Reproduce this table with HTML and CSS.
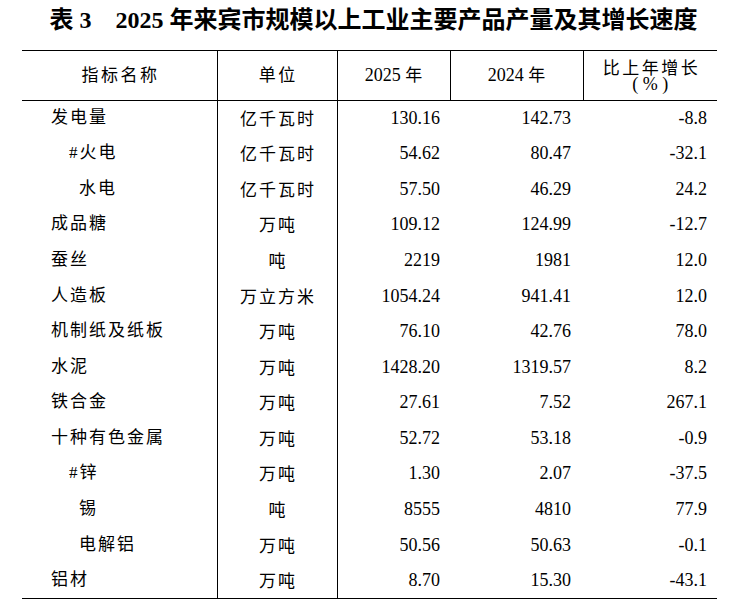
FILE: index.html
```html
<!DOCTYPE html>
<html lang="zh-CN">
<head>
<meta charset="utf-8">
<title>表3</title>
<link rel="stylesheet" href="styles.css">
</head>
<body>
<div class="page">
  <h1 class="title">表 3　2025 年来宾市规模以上工业主要产品产量及其增长速度</h1>
  <table class="data">
    <colgroup>
      <col class="c-name"><col class="c-unit"><col class="c-y1"><col class="c-y2"><col class="c-g">
    </colgroup>
    <thead>
      <tr>
        <th><span class="cj">指标名称</span></th>
        <th class="vl"><span class="cj">单位</span></th>
        <th class="vl">2025 <span class="cj">年</span></th>
        <th class="vl">2024 <span class="cj">年</span></th>
        <th class="vl"><span class="cj line">比上年增长</span><span class="pct">( % )</span></th>
      </tr>
    </thead>
    <tbody>
      <tr><td class="nm">发电量</td><td class="un">亿千瓦时</td><td class="n1">130.16</td><td class="n2">142.73</td><td class="n3">-8.8</td></tr>
      <tr><td class="nm l1">#火电</td><td class="un">亿千瓦时</td><td class="n1">54.62</td><td class="n2">80.47</td><td class="n3">-32.1</td></tr>
      <tr><td class="nm l2">水电</td><td class="un">亿千瓦时</td><td class="n1">57.50</td><td class="n2">46.29</td><td class="n3">24.2</td></tr>
      <tr><td class="nm">成品糖</td><td class="un">万吨</td><td class="n1">109.12</td><td class="n2">124.99</td><td class="n3">-12.7</td></tr>
      <tr><td class="nm">蚕丝</td><td class="un">吨</td><td class="n1">2219</td><td class="n2">1981</td><td class="n3">12.0</td></tr>
      <tr><td class="nm">人造板</td><td class="un">万立方米</td><td class="n1">1054.24</td><td class="n2">941.41</td><td class="n3">12.0</td></tr>
      <tr><td class="nm">机制纸及纸板</td><td class="un">万吨</td><td class="n1">76.10</td><td class="n2">42.76</td><td class="n3">78.0</td></tr>
      <tr><td class="nm">水泥</td><td class="un">万吨</td><td class="n1">1428.20</td><td class="n2">1319.57</td><td class="n3">8.2</td></tr>
      <tr><td class="nm">铁合金</td><td class="un">万吨</td><td class="n1">27.61</td><td class="n2">7.52</td><td class="n3">267.1</td></tr>
      <tr><td class="nm">十种有色金属</td><td class="un">万吨</td><td class="n1">52.72</td><td class="n2">53.18</td><td class="n3">-0.9</td></tr>
      <tr><td class="nm l1">#锌</td><td class="un">万吨</td><td class="n1">1.30</td><td class="n2">2.07</td><td class="n3">-37.5</td></tr>
      <tr><td class="nm l2">锡</td><td class="un">吨</td><td class="n1">8555</td><td class="n2">4810</td><td class="n3">77.9</td></tr>
      <tr><td class="nm l2">电解铝</td><td class="un">万吨</td><td class="n1">50.56</td><td class="n2">50.63</td><td class="n3">-0.1</td></tr>
      <tr><td class="nm">铝材</td><td class="un">万吨</td><td class="n1">8.70</td><td class="n2">15.30</td><td class="n3">-43.1</td></tr>
    </tbody>
  </table>
</div>
</body>
</html>
```

FILE: styles.css
```css
html, body {
  margin: 0;
  padding: 0;
  background: #ffffff;
}

body {
  color: #000000;
  font-family: "Liberation Serif", "Noto Sans CJK SC", serif;
}

.page {
  width: 695px;
  padding: 5px 0 0 22px;
}

.title {
  margin: 0;
  height: 30px;
  line-height: 30px;
  font-size: 24px;
  font-weight: bold;
  text-align: center;
  padding-left: 8px;
  white-space: nowrap;
}

.data {
  margin-top: 15px;
  width: 695px;
  border-collapse: collapse;
  table-layout: fixed;
  border-top: 1px solid #000;
  border-bottom: 1px solid #000;
}

.c-name { width: 195px; }
.c-unit { width: 120px; }
.c-y1 { width: 113px; }
.c-y2 { width: 133px; }
.c-g { width: 134px; }

.data th {
  box-sizing: border-box;
  height: 50px;
  padding: 0 0 2px 0;
  font-weight: normal;
  font-size: 18px;
  line-height: 18px;
  text-align: center;
  vertical-align: middle;
  border-bottom: 1px solid #000;
}

.data th.vl {
  border-left: 1px solid #000;
}

.cj {
  font-family: "Noto Sans CJK SC", sans-serif;
  font-size: 17px;
  letter-spacing: 2.5px;
  margin-right: -2.5px;
}

.line {
  display: block;
  line-height: 17px;
  height: 17px;
  margin-top: 2px;
}

.pct {
  display: block;
  font-size: 18px;
  line-height: 18px;
  height: 18px;
  white-space: pre;
}

.data tbody tr {
  height: 35.6px;
}

.data td {
  box-sizing: border-box;
  height: 35.6px;
  padding: 0 0 1.5px 0;
  line-height: 20px;
  vertical-align: middle;
  white-space: nowrap;
}

.nm {
  font-family: "Liberation Serif", "Noto Sans CJK SC", serif;
  font-size: 17px;
  letter-spacing: 2px;
  padding-left: 29px !important;
}

.nm.l1 { padding-left: 47px !important; }
.nm.l2 { padding-left: 57px !important; }

.un {
  font-family: "Noto Sans CJK SC", sans-serif;
  font-size: 17px;
  letter-spacing: 2px;
  text-align: center;
  border-left: 1px solid #000;
  text-indent: 2px;
}

.n1, .n2, .n3 {
  font-size: 18px;
  text-align: right;
}

.n1 {
  border-left: 1px solid #000;
  padding-right: 10px !important;
}

.n2 { padding-right: 12px !important; }
.n3 { padding-right: 10px !important; }
```
